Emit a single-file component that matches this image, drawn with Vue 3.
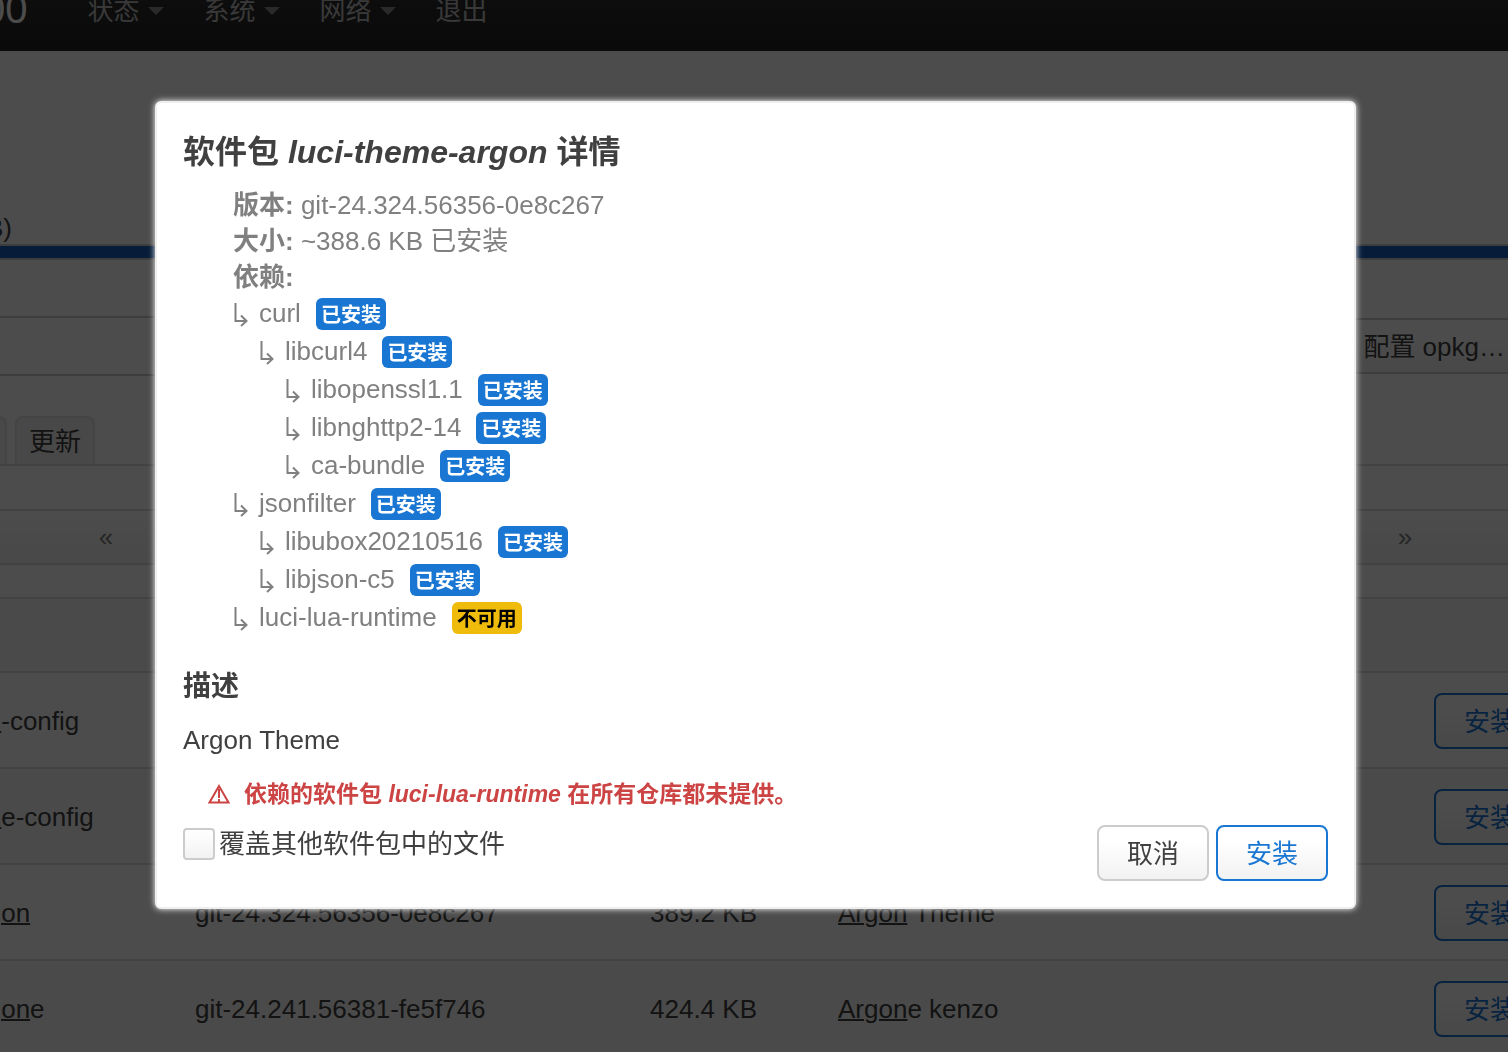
<script setup>
import { ref } from 'vue'

const menus = [
  { label: '状态', caret: true },
  { label: '系统', caret: true },
  { label: '网络', caret: true },
  { label: '退出', caret: false },
]

const packages = [
  { pre: 'luci-app-', post: '-config', version: '', size: '', hit: '', desc: '' },
  { pre: 'luci-app-', post: 'e-config', version: '', size: '', hit: '', desc: '' },
  { pre: 'luci-theme-', post: '', version: 'git-24.324.56356-0e8c267', size: '389.2 KB', hit: 'Argon', desc: ' Theme' },
  { pre: 'luci-theme-', post: 'e', version: 'git-24.241.56381-fe5f746', size: '424.4 KB', hit: 'Argon', desc: 'e kenzo' },
]

const deps = [
  { name: 'curl', level: 0, ok: true },
  { name: 'libcurl4', level: 1, ok: true },
  { name: 'libopenssl1.1', level: 2, ok: true },
  { name: 'libnghttp2-14', level: 2, ok: true },
  { name: 'ca-bundle', level: 2, ok: true },
  { name: 'jsonfilter', level: 0, ok: true },
  { name: 'libubox20210516', level: 1, ok: true },
  { name: 'libjson-c5', level: 1, ok: true },
  { name: 'luci-lua-runtime', level: 0, ok: false },
]

const filter = ref('')
const overwrite = ref(false)
</script>

<template>
  <div class="page">
    <header class="topbar">
      <a class="brand" href="#">00</a>
      <nav class="menu">
        <a v-for="m in menus" :key="m.label" href="#">{{ m.label }}<i v-if="m.caret" class="caret"></i></a>
      </nav>
    </header>

    <main class="content">
      <div class="space-label">B)</div>
      <div class="progress"></div>

      <div class="controls">
        <input v-model="filter" class="filter" type="text" aria-label="过滤器" />
        <button class="btn" type="button">配置 opkg…</button>
      </div>

      <div class="tabs">
        <button type="button">已安装</button>
        <button type="button">更新</button>
      </div>

      <div class="pager">
        <button class="prev" type="button">«</button>
        <button class="next" type="button">»</button>
      </div>

      <table class="packages">
        <colgroup>
          <col class="c-name" /><col class="c-version" /><col class="c-size" /><col /><col class="c-action" />
        </colgroup>
        <thead>
          <tr><th></th><th></th><th></th><th></th><th></th></tr>
        </thead>
        <tbody>
          <tr v-for="(p, i) in packages" :key="i">
            <td>{{ p.pre }}<u>argon</u>{{ p.post }}</td>
            <td>{{ p.version }}</td>
            <td>{{ p.size }}</td>
            <td><u>{{ p.hit }}</u>{{ p.desc }}</td>
            <td><button class="btn primary" type="button">安装</button></td>
          </tr>
        </tbody>
      </table>
    </main>

    <div class="overlay">
      <section class="modal" role="dialog" aria-modal="true" aria-labelledby="dialog-title">
        <h4 id="dialog-title">软件包 <em>luci-theme-argon</em> 详情</h4>
        <ul class="info">
          <li><strong>版本:</strong> git-24.324.56356-0e8c267</li>
          <li><strong>大小:</strong> ~388.6 KB 已安装</li>
          <li>
            <strong>依赖:</strong>
            <ul class="deps">
              <li v-for="d in deps" :key="d.name" :class="'level-' + d.level">
                <svg class="arrow" viewBox="0 0 26 38" aria-hidden="true">
                  <path d="M2.500 8v18H13M8 20.500l5.500 5.500L8 31" />
                </svg>
                <span class="name">{{ d.name }}</span>
                <span class="label" :class="{ warning: !d.ok }">{{ d.ok ? '已安装' : '不可用' }}</span>
              </li>
            </ul>
          </li>
        </ul>

        <h5>描述</h5>
        <p>Argon Theme</p>

        <div class="errors">
          <svg viewBox="0 0 22 20" aria-hidden="true">
            <path d="M11 2 20.500 18.500H1.500Z" />
            <path d="M11 5v9M11 15v3" />
          </svg>
          <span>依赖的软件包 <em>luci-lua-runtime</em> 在所有仓库都未提供。</span>
        </div>

        <div class="actions">
          <label><input v-model="overwrite" type="checkbox" />覆盖其他软件包中的文件</label>
          <button class="btn" type="button">取消</button>
          <button class="btn primary" type="button">安装</button>
        </div>
      </section>
    </div>
  </div>
</template>

<style>
body {
  overflow: hidden;
  background: #fff;
}
</style>

<style scoped>
* {
  box-sizing: border-box;
}

.page {
  height: 100vh;
  overflow: hidden;
  color: #404040;
  font: 26px/36px "Liberation Sans", "Noto Sans CJK SC", sans-serif;
}

button,
input {
  font: inherit;
  color: inherit;
}

ul {
  margin: 0;
  padding: 0;
  list-style: none;
}

/* Page, scrolled part of the way down and to the right */
.topbar {
  display: flex;
  align-items: center;
  gap: 60px;
  height: 80px;
  margin-top: -29px;
  background: linear-gradient(#333, #222);
}

.brand {
  margin-left: -17px;
  padding-bottom: 4px;
  color: #fff;
  font-size: 40px;
  text-decoration: none;
}

.menu {
  display: flex;
  gap: 40px;
}

.menu a {
  display: flex;
  align-items: center;
  gap: 8px;
  color: #bfbfbf;
  text-decoration: none;
}

.caret {
  border: 8px solid transparent;
  border-top-color: #8c8c8c;
  border-bottom: 0;
}

.content {
  margin: 0 -50px 0 -177px;
  padding-top: 161px;
}

.space-label {
  width: 189px;
  line-height: 32px;
  text-align: right;
}

.progress {
  height: 16px;
  border: 2px solid #ccc;
  background: #145fc0;
}

.controls {
  display: flex;
  align-items: center;
  justify-content: space-between;
  margin-top: 56px;
  padding-right: 23px;
}

.filter {
  width: 600px;
  height: 60px;
  border: 2px solid #ccc;
  background: #fff;
}

.btn {
  height: 56px;
  padding: 2px 28px 0;
  border: 2px solid #ccc;
  border-radius: 8px;
  background: linear-gradient(#fff 25%, #f2f2f2);
  white-space: nowrap;
}

.btn.primary {
  border-color: #1976d2;
  color: #1976d2;
}

.tabs {
  display: flex;
  gap: 8px;
  margin-top: 40px;
  padding-left: 78px;
  border-bottom: 2px solid #ddd;
}

.tabs button {
  height: 48px;
  padding: 2px 12px 0;
  border: 2px solid #e3e3e3;
  border-bottom: 0;
  border-radius: 8px 8px 0 0;
  background: #f2f2f2;
}

.pager {
  display: flex;
  justify-content: space-between;
  margin-top: 43px;
  border: 2px solid #ddd;
  background: linear-gradient(#fff, #f2f2f2);
}

.pager button {
  height: 52px;
  padding: 0;
  border: 0;
  background: none;
  color: #808080;
}

.prev {
  width: 562px;
}

.next {
  width: 302px;
}

.packages {
  width: 100%;
  margin-top: 32px;
  border-spacing: 0;
  table-layout: fixed;
}

.c-name {
  width: 360px;
}

.c-version {
  width: 455px;
}

.c-size {
  width: 188px;
}

.c-action {
  width: 136px;
}

.packages th {
  height: 74px;
  border-top: 2px solid #ddd;
  background: #f9f9f9;
}

.packages td {
  height: 96px;
  padding: 20px 12px 18px;
  border-top: 2px solid #ddd;
  white-space: nowrap;
}

.packages .btn {
  display: block;
}

.packages tbody tr:nth-child(even) {
  background: #f9f9f9;
}

.packages u {
  text-decoration-thickness: 2px;
}

/* Dialog */
.overlay {
  position: fixed;
  inset: 0;
  padding: 101px 0 0 3px;
  background: rgba(0, 0, 0, 0.7);
}

.modal {
  width: 90%;
  max-width: 1201px;
  margin: 0 auto;
  padding: 29px 26px 26px;
  border: 2px solid #eee;
  border-radius: 6px;
  background: #fff;
  box-shadow: 0 0 6px #fff;
}

h4 {
  margin: 0 0 15px;
  font-size: 32px;
  line-height: 40px;
}

.info {
  margin-left: 50px;
  color: #808080;
}

.deps li {
  display: flex;
  align-items: center;
  height: 38px;
}

.deps .level-1 {
  padding-left: 26px;
}

.deps .level-2 {
  padding-left: 52px;
}

.arrow {
  flex: none;
  width: 26px;
  height: 38px;
  fill: none;
  stroke: #808080;
  stroke-width: 2;
}

.name {
  padding-bottom: 2px;
}

.label {
  margin-left: 15px;
  padding: 2px 5px 0;
  border-radius: 6px;
  background: #1976d2;
  color: #fff;
  font-size: 20px;
  font-weight: bold;
  line-height: 30px;
}

.label.warning {
  background: #f0bc0c;
  color: #000;
}

h5 {
  margin: 32px 0 17px;
  font-size: 28px;
  line-height: 36px;
}

p {
  margin: 0 0 18px;
}

.errors {
  display: flex;
  align-items: center;
  gap: 14px;
  margin: 0 0 13px 25px;
  color: #cc4444;
  font-size: 23px;
  font-weight: bold;
}

.errors svg {
  width: 22px;
  height: 20px;
  fill: none;
  stroke: currentColor;
  stroke-width: 2;
}

.actions {
  display: flex;
  gap: 7px;
}

.actions label {
  display: flex;
  align-items: center;
  gap: 4px;
  height: 38px;
  margin-right: auto;
}

.actions input {
  appearance: none;
  width: 32px;
  height: 32px;
  margin: 0;
  border: 2px solid #ccc;
  border-radius: 4px;
  background: linear-gradient(#fff, #f2f2f2);
}
</style>
